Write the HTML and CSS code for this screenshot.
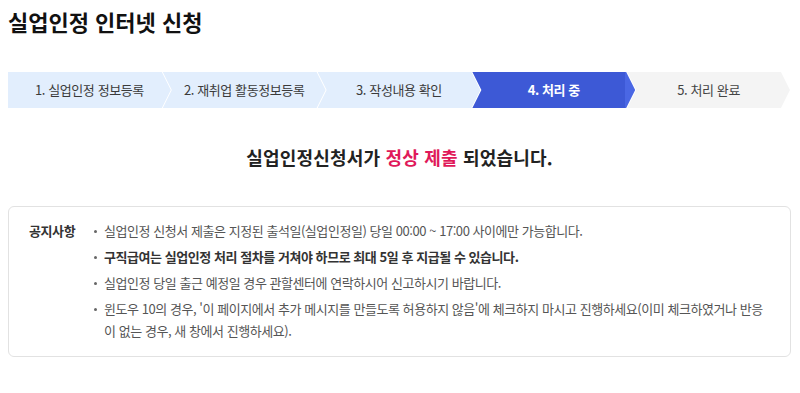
FILE: index.html
```html
<!DOCTYPE html>
<html lang="ko">
<head>
    <meta charset="UTF-8">
    <title>실업인정 인터넷 신청</title>
    <link rel="stylesheet" href="styles.css">
</head>
<body>

<div class="page">
    <h1 class="page-title">실업인정 인터넷 신청</h1>

    <!-- 진행 단계 -->
    <ol class="steps">
        <li class="step">1. 실업인정 정보등록</li>
        <li class="step">2. 재취업 활동정보등록</li>
        <li class="step">3. 작성내용 확인</li>
        <li class="step step-active">4. 처리 중</li>
        <li class="step step-todo">5. 처리 완료</li>
    </ol>

    <p class="result-msg">실업인정신청서가 <em>정상 제출</em> 되었습니다.</p>

    <div class="notice">
        <div class="notice-label">공지사항</div>
        <ul class="notice-list">
            <li>실업인정 신청서 제출은 지정된 출석일(실업인정일) 당일 00:00 ~ 17:00 사이에만 가능합니다.</li>
            <li class="strong">구직급여는 실업인정 처리 절차를 거쳐야 하므로 최대 5일 후 지급될 수 있습니다.</li>
            <li>실업인정 당일 출근 예정일 경우 관할센터에 연락하시어 신고하시기 바랍니다.</li>
            <li>윈도우 10의 경우, '이 페이지에서 추가 메시지를 만들도록 허용하지 않음'에 체크하지 마시고 진행하세요(이미 체크하였거나 반응 이 없는 경우, 새 창에서 진행하세요).</li>
        </ul>
    </div>
</div>

</body>
</html>
```

FILE: styles.css
```css
body {
    font-family: "Noto Sans CJK KR", "Noto Sans", sans-serif;
    background-color: #fff;
    color: #333;
    margin: 0;
}

.page {
    padding: 0 9px 0 8px;
}

.page-title {
    margin: 0;
    padding-top: 5px;
    font-size: 22px;
    line-height: 32px;
    font-weight: bold;
    color: #111;
}

/* 진행 단계 */
.steps {
    display: flex;
    list-style: none;
    margin: 35px 0 0;
    padding: 0;
    width: 782px;
}

.step {
    flex: 1;
    height: 36px;
    line-height: 36px;
    margin-left: -8px;
    text-align: center;
    font-size: 13px;
    letter-spacing: -0.4px;
    color: #3a3a3a;
    background-color: #e2eefd;
    clip-path: polygon(0 0, calc(100% - 9px) 0, 100% 50%, calc(100% - 9px) 100%, 0 100%, 9px 50%);
}

.step:first-child {
    margin-left: 0;
    clip-path: polygon(0 0, calc(100% - 9px) 0, 100% 50%, calc(100% - 9px) 100%, 0 100%);
}

.step-active {
    color: #fff;
    font-weight: bold;
    background: linear-gradient(to right, #3d59d6 calc(100% - 10px), #4a67e4 calc(100% - 10px));
}

.step-todo {
    background-color: #f4f4f4;
    color: #444;
}

.result-msg {
    margin: 36px 0 0;
    text-align: center;
    font-size: 18px;
    line-height: 26px;
    font-weight: bold;
    letter-spacing: 0.2px;
    color: #222;
}

.result-msg em {
    font-style: normal;
    color: #e0195a;
}

/* 공지사항 */
.notice {
    display: flex;
    margin-top: 36px;
    padding: 13px 24px 14px 20px;
    border: 1px solid #e2e2e2;
    border-radius: 6px;
}

.notice-label {
    width: 65px;
    flex-shrink: 0;
    font-size: 13px;
    line-height: 22px;
    font-weight: bold;
    letter-spacing: -0.4px;
    color: #333;
}

.notice-list {
    list-style: none;
    margin: 0;
    padding: 0;
    font-size: 13px;
    line-height: 22px;
    letter-spacing: -0.45px;
    color: #555;
    word-break: keep-all;
}

.notice-list li {
    position: relative;
    padding-left: 10px;
    margin-bottom: 4px;
}

.notice-list li:last-child {
    margin-bottom: 0;
}

.notice-list li::before {
    content: "";
    position: absolute;
    left: 0;
    top: 10px;
    width: 3px;
    height: 3px;
    border-radius: 50%;
    background-color: #666;
}

.notice-list .strong {
    font-weight: bold;
    color: #333;
}
```
